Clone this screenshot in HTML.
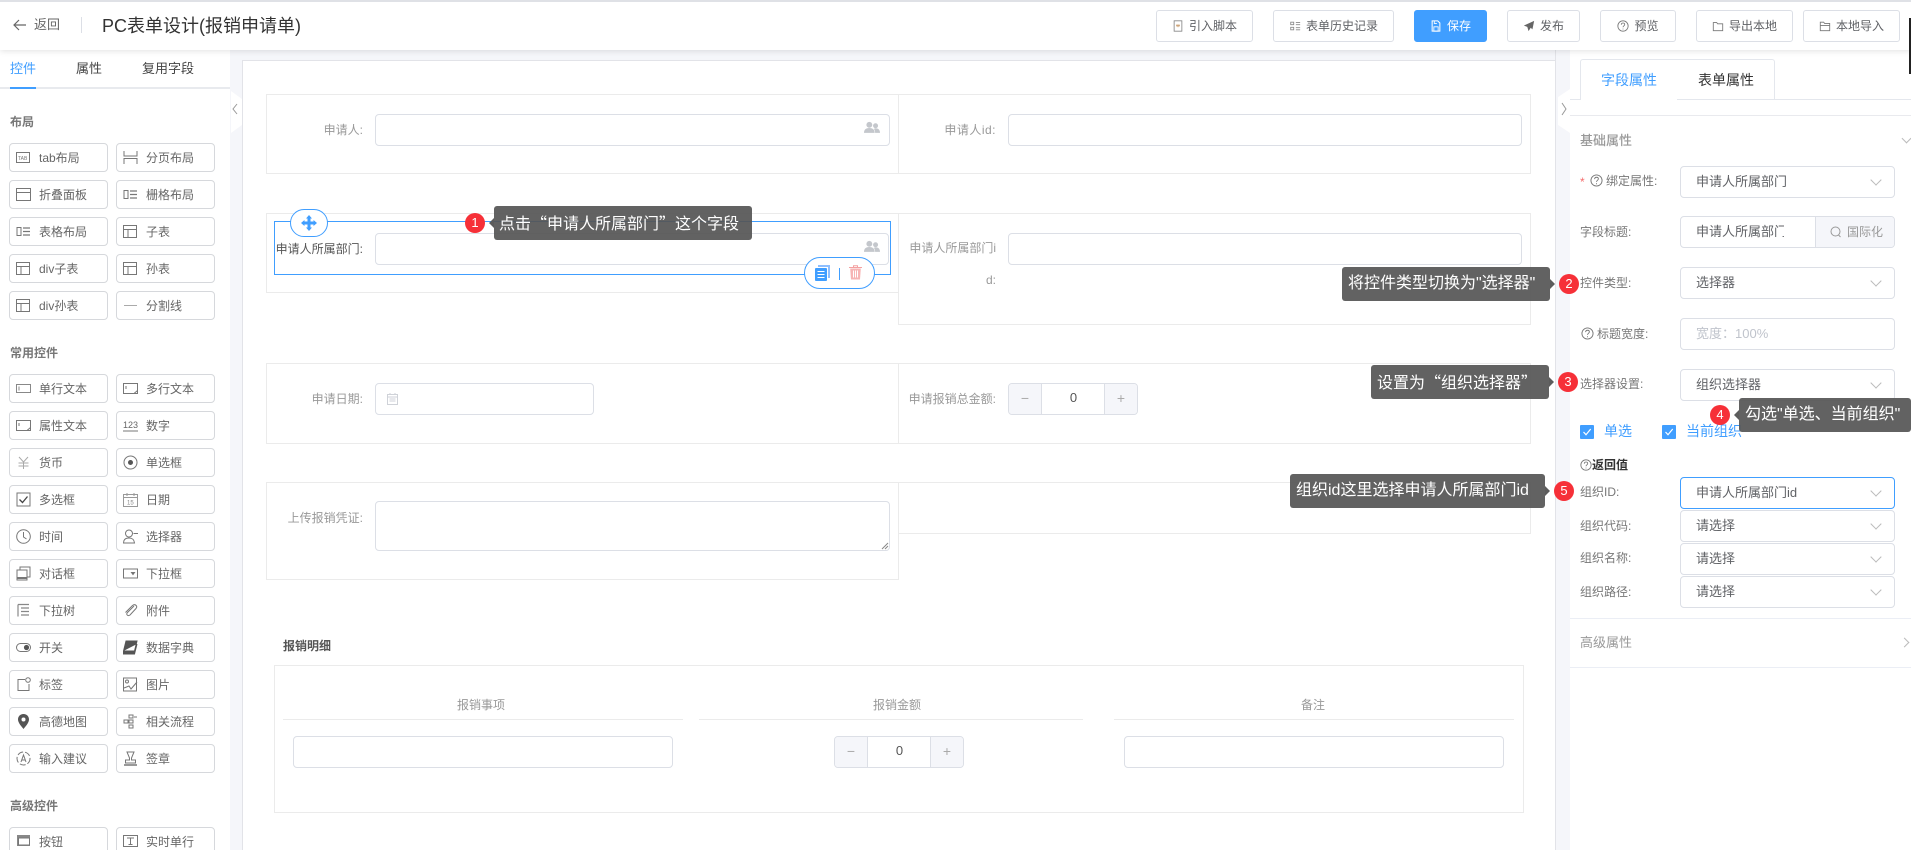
<!DOCTYPE html>
<html lang="zh"><head><meta charset="utf-8"><title>PC表单设计</title>
<style>
*{box-sizing:border-box}
html,body{margin:0;padding:0;width:1911px;height:850px;overflow:hidden;background:#f5f6fa;font-family:"Liberation Sans","Noto Sans CJK SC",sans-serif;color:#606266}
#root{position:relative;width:1911px;height:850px;overflow:hidden}
.a{position:absolute}
.t{position:absolute;white-space:nowrap;font-size:12px;line-height:18px}
#hd{left:0;top:0;width:1911px;height:50px;background:#fff;border-top:2px solid #dfe1e6;box-shadow:0 1px 6px rgba(0,0,0,.12);z-index:5}
.hb{position:absolute;top:10px;height:32px;border:1px solid #dcdfe6;border-radius:3px;background:#fff;font-size:12px;line-height:30px;color:#606266;text-align:center;white-space:nowrap;z-index:6}
.hb svg{width:12px;height:12px;vertical-align:-2px;margin-right:5px}
.hb.p{background:#409eff;border-color:#409eff;color:#fff}
#lp{left:0;top:50px;width:230px;height:800px;background:#fff}
.b{position:absolute;width:99px;height:29px;border:1px solid #d6d8dc;border-radius:4px;background:#fff;font-size:12px;line-height:28px;padding-left:29px;color:#666;white-space:nowrap}
.b svg{position:absolute;left:6px;top:6px;width:15px;height:15px;fill:none;stroke:#777;stroke-width:1}
.sec{position:absolute;left:10px;font-size:12px;font-weight:bold;color:#777;line-height:18px}
#fm{left:242px;top:60px;width:1314px;height:800px;background:#fff;border:1px solid #e2e3e8}
.cell{position:absolute;border:1px solid #ebebeb;background:#fff}
.in{position:absolute;background:#fff;border:1px solid #dcdfe6;border-radius:4px}
.lb{position:absolute;text-align:right;font-size:12px;line-height:18px;color:#999;white-space:nowrap}
#rp{left:1570px;top:50px;width:341px;height:800px;background:#fff}
.sl{position:absolute;left:1680px;width:215px;height:32px;background:#fff;border:1px solid #dcdfe6;border-radius:4px;font-size:13px;line-height:30px;padding-left:15px;color:#606266;white-space:nowrap}
.sl::after{content:"";position:absolute;right:14px;top:9px;width:7px;height:7px;border-right:1px solid #bbb;border-bottom:1px solid #bbb;transform:rotate(45deg)}
.rl{position:absolute;left:1580px;font-size:12px;line-height:18px;color:#777;white-space:nowrap}
.tip{position:absolute;height:34px;background:rgba(85,85,85,.92);border-radius:3px;color:#fff;font-size:16px;line-height:33px;white-space:nowrap;z-index:9;padding-left:6px}
.tip::after{content:"";position:absolute;top:12px;border:5px solid transparent}
.tip.r::after{right:-10px;border-left-color:#5c5c5c}
.tip.l::after{left:-10px;border-right-color:#5c5c5c}
.dot{position:absolute;width:20px;height:20px;border-radius:50%;background:#f63038;color:#fff;font-size:13px;line-height:20px;text-align:center;z-index:10}
.ck{position:absolute;width:14px;height:14px;background:#409eff;border-radius:1px}
.ck svg{position:absolute;left:2px;top:2px;width:10px;height:10px}
.ch{position:absolute;width:7px;height:7px;border-right:1px solid #bbb;border-bottom:1px solid #bbb}
.nm{position:absolute;top:0;height:30px;background:#f5f6fa;color:#aaa;text-align:center;line-height:28px;font-size:14px;width:33px}
.nv{position:absolute;left:33px;top:0;width:63px;height:30px;text-align:center;line-height:27px;font-size:13px;color:#555}
</style></head><body>
<svg width="0" height="0" style="position:absolute">
<defs>
<symbol id="tb" viewBox="0 0 15 15"><rect x=".5" y="1.500" width="13" height="12" fill="none" stroke="#777"/><path d="M.5 5.500h13M5 5.500v8" fill="none" stroke="#777"/></symbol>
<symbol id="ti" viewBox="0 0 15 15"><rect x=".5" y="3.500" width="14" height="8" fill="none" stroke="#888"/><path d="M3 5.500v4" fill="none" stroke="#888"/></symbol>
<symbol id="ta" viewBox="0 0 15 15"><rect x=".5" y="2.500" width="14" height="10" fill="none" stroke="#777"/><path d="M3 5v3M11 12.500l3.500-3" fill="none" stroke="#777"/></symbol>
<symbol id="ls" viewBox="0 0 15 15"><rect x="1" y="3.500" width="4" height="8" fill="none" stroke="#777"/><path d="M7 4h7M7 7.500h7M7 11h7" fill="none" stroke="#777" stroke-width="1.300"/></symbol>
<symbol id="pp" viewBox="0 0 18 14"><circle cx="6" cy="4" r="3.300" fill="#c4c7cc"/><circle cx="13" cy="5" r="2.800" fill="#c4c7cc"/><path d="M0 13c0-4 2.500-5.500 6-5.500S12 9 12 13zM12.500 13c0-2-.5-3.500-1.500-4.500 1-.5 4-1 5.500.5 1 1 1.500 2.500 1.500 4z" fill="#c4c7cc"/></symbol>
<symbol id="ckm" viewBox="0 0 10 10"><path d="M1.500 5l2.500 2.700L8.700 2" fill="none" stroke="#fff" stroke-width="1.200"/></symbol>
<symbol id="q" viewBox="0 0 14 14"><circle cx="7" cy="7" r="6" fill="none" stroke="#777"/><path d="M5 5.500c0-1.300 1-2 2.100-2S9 4.300 9 5.300C9 6.800 7 6.800 7 8.500M7 10v1" fill="none" stroke="#777" stroke-width="1"/></symbol>
</defs></svg>
<div id="root">
<div id="hd" class="a"></div>
<svg class="a" style="left:12px;top:17px;z-index:6" width="16" height="16" viewBox="0 0 16 16"><path d="M14 8H2M7 3L2 8l5 5" fill="none" stroke="#666" stroke-width="1.200"/></svg>
<div class="t" style="left:34px;top:16px;font-size:13px;color:#666;z-index:6">返回</div>
<div class="a" style="left:81px;top:17px;width:1px;height:16px;background:#dcdfe6;z-index:6"></div>
<div class="t" style="left:102px;top:14px;font-size:18px;line-height:24px;color:#333;z-index:6">PC表单设计(报销申请单)</div>

<div class="hb" style="left:1156px;width:97px"><svg viewBox="0 0 14 14"><path d="M2.500 1h9v12h-9z" fill="none" stroke="#888"/><path d="M5 5.500l1 2 1-2 1 2 1-2" fill="none" stroke="#c89a6a"/></svg>引入脚本</div>
<div class="hb" style="left:1273px;width:121px"><svg viewBox="0 0 14 14"><path d="M2 2.500h3.500v3H2zM2 8.500h3.500v3H2zM8 3h5M8 5.500h5M8 9h5M8 11.500h5" fill="none" stroke="#888"/></svg>表单历史记录</div>
<div class="hb p" style="left:1414px;width:73px"><svg viewBox="0 0 14 14"><path d="M2.500 1h6.500l2.500 2.500V13h-9z" fill="none" stroke="#fff" stroke-width="1.200"/><path d="M4.500 8h5v5h-5zM5 1v3h3" fill="none" stroke="#fff"/></svg>保存</div>
<div class="hb" style="left:1507px;width:73px"><svg viewBox="0 0 14 14"><path d="M13 1L1 6.500l4 1.500 1.500 5L9 9l2 2z" fill="#666"/></svg>发布</div>
<div class="hb" style="left:1600px;width:76px"><svg viewBox="0 0 14 14"><use href="#q"/></svg>预览</div>
<div class="hb" style="left:1696px;width:97px"><svg viewBox="0 0 14 14"><path d="M1.500 3h4l1 1.500h6v8h-11z" fill="none" stroke="#777"/></svg>导出本地</div>
<div class="hb" style="left:1803px;width:97px"><svg viewBox="0 0 14 14"><path d="M1.500 2.500h4l1 1.500h6v8.500h-11zM1.500 6.500h11" fill="none" stroke="#777"/></svg>本地导入</div>
<div class="a" style="left:1909px;top:18px;width:2px;height:56px;background:#222;z-index:7"></div>

<!-- left panel -->
<div id="lp" class="a"></div>
<div class="a" style="left:0;top:87px;width:230px;height:2px;background:#e8eaee"></div>
<div class="a" style="left:10px;top:87px;width:26px;height:2px;background:#409eff"></div>
<div class="t" style="left:10px;top:60px;font-size:13px;color:#409eff">控件</div>
<div class="t" style="left:76px;top:60px;font-size:13px;color:#444">属性</div>
<div class="t" style="left:142px;top:60px;font-size:13px;color:#444">复用字段</div>
<svg class="a" style="left:231px;top:91px" width="11" height="42" viewBox="0 0 11 42"><path d="M0 0l11 8v26L0 42z" fill="#fff"/><path d="M6 13l-4 5 4 5" fill="none" stroke="#999"/></svg>

<div class="sec" style="top:113px">布局</div>
<div class="b" style="left:9px;top:143px"><svg viewBox="0 0 15 15"><rect x=".5" y="2.500" width="13" height="10"/><text x="2" y="10" font-size="5" fill="#777" stroke="none" font-family="Liberation Sans">TAB</text></svg>tab布局</div>
<div class="b" style="left:116px;top:143px"><svg viewBox="0 0 15 15"><path d="M1 1v5h13V1M1 14V8.500h13V14"/></svg>分页布局</div>
<div class="b" style="left:9px;top:180px"><svg viewBox="0 0 15 15"><rect x=".5" y="1.500" width="14" height="12"/><path d="M.5 5.500h14"/></svg>折叠面板</div>
<div class="b" style="left:116px;top:180px"><svg><use href="#ls"/></svg>栅格布局</div>
<div class="b" style="left:9px;top:217px"><svg><use href="#ls"/></svg>表格布局</div>
<div class="b" style="left:116px;top:217px"><svg><use href="#tb"/></svg>子表</div>
<div class="b" style="left:9px;top:254px"><svg><use href="#tb"/></svg>div子表</div>
<div class="b" style="left:116px;top:254px"><svg><use href="#tb"/></svg>孙表</div>
<div class="b" style="left:9px;top:291px"><svg><use href="#tb"/></svg>div孙表</div>
<div class="b" style="left:116px;top:291px"><svg viewBox="0 0 15 15"><path d="M1 7.500h13" stroke="#aaa"/></svg>分割线</div>

<div class="sec" style="top:344px">常用控件</div>
<div class="b" style="left:9px;top:374px"><svg><use href="#ti"/></svg>单行文本</div>
<div class="b" style="left:116px;top:374px"><svg><use href="#ta"/></svg>多行文本</div>
<div class="b" style="left:9px;top:411px"><svg><use href="#ta"/></svg>属性文本</div>
<div class="b" style="left:116px;top:411px"><svg viewBox="0 0 15 15"><text x="0" y="10" font-size="9" fill="#666" stroke="none" font-family="Liberation Sans">123</text><path d="M0 13h15"/></svg>数字</div>
<div class="b" style="left:9px;top:448px"><svg viewBox="0 0 15 15"><path d="M3 2l4.500 5L12 2M2.500 8h10M2.500 11h10M7.500 7v7" stroke="#aaa"/></svg>货币</div>
<div class="b" style="left:116px;top:448px"><svg viewBox="0 0 15 15"><circle cx="7.500" cy="7.500" r="6.500"/><circle cx="7.500" cy="7.500" r="2.500" fill="#555" stroke="none"/></svg>单选框</div>
<div class="b" style="left:9px;top:485px"><svg viewBox="0 0 15 15"><rect x="1" y="1" width="13" height="13"/><path d="M3.500 7.500l3 3 5-6" stroke="#444" stroke-width="1.300"/></svg>多选框</div>
<div class="b" style="left:116px;top:485px"><svg viewBox="0 0 15 15"><path d="M.5 2.500h14v12H.5zM.5 5.500h14M4 1v3M11 1v3" stroke="#999"/><text x="4" y="12.500" font-size="6" fill="#888" stroke="none" font-family="Liberation Sans">15</text></svg>日期</div>
<div class="b" style="left:9px;top:522px"><svg viewBox="0 0 15 15"><circle cx="7.500" cy="7.500" r="6.800"/><path d="M7.500 3v5l3 2"/></svg>时间</div>
<div class="b" style="left:116px;top:522px"><svg viewBox="0 0 15 15"><circle cx="6" cy="4.500" r="3.500"/><path d="M.5 14c0-3.500 2-5 5.500-5s5 1.500 5.500 5zM10.500 4.500H15"/></svg>选择器</div>
<div class="b" style="left:9px;top:559px"><svg viewBox="0 0 15 15"><path d="M1 4h10v10H1zM4 4V1h10v10h-3"/><path d="M1 12h10" stroke-width="2"/></svg>对话框</div>
<div class="b" style="left:116px;top:559px"><svg viewBox="0 0 15 15"><rect x=".5" y="3" width="14" height="9"/><path d="M8.500 6.500h3l-1.500 2z" fill="#666"/></svg>下拉框</div>
<div class="b" style="left:9px;top:596px"><svg viewBox="0 0 15 15"><path d="M2 1.500h11M2 1.500v12M5 5h8M5 8.500h8M5 12h8" stroke="#888" stroke-width="1.200"/></svg>下拉树</div>
<div class="b" style="left:116px;top:596px"><svg viewBox="0 0 15 15"><path d="M11 3L4.500 9.500c-2 2 .5 4 2.500 2.500L13 5.500C15 3 12 .5 9.500 2.500L2.500 9.500"/></svg>附件</div>
<div class="b" style="left:9px;top:633px"><svg viewBox="0 0 15 15"><rect x=".5" y="3.500" width="14" height="8" rx="4"/><circle cx="10.500" cy="7.500" r="2.600" fill="#555" stroke="none"/></svg>开关</div>
<div class="b" style="left:116px;top:633px"><svg viewBox="0 0 15 15"><path d="M3 1h11l-2.500 10H.5zM.5 11v3h11l2.500-10" fill="#555" stroke="#555"/></svg>数据字典</div>
<div class="b" style="left:9px;top:670px"><svg viewBox="0 0 15 15"><path d="M9 2.500H2v11h11V7"/><circle cx="12" cy="3" r="2.300"/></svg>标签</div>
<div class="b" style="left:116px;top:670px"><svg viewBox="0 0 15 15"><rect x=".5" y="1" width="13" height="13"/><circle cx="4" cy="4.500" r="1.500"/><path d="M1 11l5-2 2 3 6-7"/></svg>图片</div>
<div class="b" style="left:9px;top:707px"><svg viewBox="0 0 15 15"><path d="M7.500 0C4 0 2 2.500 2 5.500 2 9 6 13 7.500 15 9 13 13 9 13 5.500 13 2.500 11 0 7.500 0z" fill="#555" stroke="none"/><circle cx="7.500" cy="5.500" r="2" fill="#fff" stroke="none"/></svg>高德地图</div>
<div class="b" style="left:116px;top:707px"><svg viewBox="0 0 15 15"><rect x="6" y="1" width="4" height="3"/><rect x="1" y="6" width="4" height="3"/><rect x="6" y="6" width="4" height="3"/><rect x="6" y="11" width="4" height="3"/><path d="M11 3h3"/></svg>相关流程</div>
<div class="b" style="left:9px;top:744px"><svg viewBox="0 0 15 15"><circle cx="7.500" cy="7.500" r="6.500" stroke-dasharray="6 2"/><path d="M5 11l2.500-7 2.500 7M6 9h3"/></svg>输入建议</div>
<div class="b" style="left:116px;top:744px"><svg viewBox="0 0 15 15"><path d="M4 1h7l-2.500 6v2h4v3h-10V9h4V7z"/><path d="M1 14h13" stroke-width="1.500"/></svg>签章</div>

<div class="sec" style="top:797px">高级控件</div>
<div class="b" style="left:9px;top:827px"><svg viewBox="0 0 15 15"><rect x="1" y="1" width="13" height="11" fill="#888" stroke="none"/><rect x="2.500" y="4" width="11" height="7" fill="#fff"/></svg>按钮</div>
<div class="b" style="left:116px;top:827px"><svg viewBox="0 0 15 15"><rect x=".5" y="1.500" width="14" height="11"/><path d="M4 4h7M7.500 4v6.500M5.500 10.500h4"/></svg>实时单行</div>

<!-- form canvas -->
<div id="fm" class="a"></div>
<div class="cell" style="left:266px;top:94px;width:633px;height:80px"></div>
<div class="cell" style="left:898px;top:94px;width:633px;height:80px"></div>
<div class="cell" style="left:266px;top:213px;width:633px;height:80px"></div>
<div class="cell" style="left:898px;top:213px;width:633px;height:112px"></div>
<div class="cell" style="left:266px;top:363px;width:633px;height:81px"></div>
<div class="cell" style="left:898px;top:363px;width:633px;height:81px"></div>
<div class="cell" style="left:266px;top:482px;width:633px;height:98px"></div>
<div class="cell" style="left:898px;top:482px;width:633px;height:52px"></div>

<div class="lb" style="right:1548px;top:121px">申请人:</div>
<div class="in" style="left:375px;top:114px;width:515px;height:32px"></div>
<svg class="a" style="left:864px;top:121px" width="16" height="13"><use href="#pp"/></svg>
<div class="lb" style="right:915px;top:121px;letter-spacing:.5px">申请人id:</div>
<div class="in" style="left:1008px;top:114px;width:514px;height:32px"></div>

<div class="lb" style="right:1548px;top:240px;color:#555">申请人所属部门:</div>
<div class="in" style="left:375px;top:233px;width:514px;height:32px"></div>
<svg class="a" style="left:864px;top:240px" width="16" height="13"><use href="#pp"/></svg>
<div class="a" style="left:274px;top:221px;width:617px;height:54px;border:1px solid #409eff"></div>
<div class="a" style="left:290px;top:209px;width:38px;height:28px;border:1px solid #409eff;border-radius:14px;background:#fff"></div>
<svg class="a" style="left:301px;top:215px" width="16" height="16" viewBox="0 0 16 16"><path d="M8 0l3 3.500H9.500V6.500h3V5L16 8l-3.500 3V9.500h-3v3H11L8 16l-3-3.500h1.500v-3h-3V11L0 8l3.500-3v1.500h3v-3H5z" fill="#409eff"/></svg>
<div class="a" style="left:804px;top:257px;width:71px;height:32px;border:1px solid #409eff;border-radius:16px;background:#fff"></div>
<svg class="a" style="left:815px;top:265px" width="16" height="16" viewBox="0 0 16 16"><path d="M3 0h12v13h-2V2H3z" fill="#8fbfff"/><rect x="0" y="3" width="12" height="13" rx="1" fill="#409eff"/><path d="M2.500 6.500h7M2.500 9.500h7M2.500 12.500h7" stroke="#fff"/></svg>
<div class="a" style="left:839px;top:268px;width:1px;height:12px;background:#409eff"></div>
<svg class="a" style="left:849px;top:265px" width="13" height="15" viewBox="0 0 13 15"><path d="M0 2.500h13M4.500 2.500V.7h4v1.800" stroke="#f4a0a0" fill="none"/><path d="M1.200 3.500h10.600L11 14.500H2z" fill="#f7b4b4"/><path d="M4.500 5.500v7M6.500 5.500v7M8.500 5.500v7" stroke="#fff"/></svg>

<div class="lb" style="right:915px;top:239px">申请人所属部门i</div>
<div class="lb" style="right:915px;top:271px">d:</div>
<div class="in" style="left:1008px;top:233px;width:514px;height:32px"></div>

<div class="lb" style="right:1548px;top:390px">申请日期:</div>
<div class="in" style="left:375px;top:383px;width:219px;height:32px"></div>
<svg class="a" style="left:387px;top:393px" width="11" height="12" viewBox="0 0 11 12"><path d="M.5 1.500h10v10H.5zM.5 4h10M3 0v2M8 0v2M2.500 6h6M2.500 8h6" fill="none" stroke="#cfd2d8"/></svg>
<div class="lb" style="right:915px;top:390px">申请报销总金额:</div>
<div class="in" style="left:1008px;top:383px;width:130px;height:32px;overflow:hidden">
  <div class="nm" style="left:0;border-right:1px solid #dcdfe6">−</div>
  <div class="nv">0</div>
  <div class="nm" style="right:0;border-left:1px solid #dcdfe6">+</div>
</div>

<div class="lb" style="right:1548px;top:509px">上传报销凭证:</div>
<div class="in" style="left:375px;top:501px;width:515px;height:50px"></div>
<svg class="a" style="left:881px;top:542px" width="8" height="8"><path d="M1 7l6-6M4 7l3-3" stroke="#888" fill="none"/></svg>

<div class="t" style="left:283px;top:637px;font-weight:bold;color:#555;font-size:12px">报销明细</div>
<div class="cell" style="left:274px;top:665px;width:1250px;height:148px"></div>
<div class="a" style="left:283px;top:719px;width:400px;height:1px;background:#ebebeb"></div>
<div class="a" style="left:699px;top:719px;width:384px;height:1px;background:#ebebeb"></div>
<div class="a" style="left:1114px;top:719px;width:400px;height:1px;background:#ebebeb"></div>
<div class="lb" style="left:457px;top:696px">报销事项</div>
<div class="lb" style="left:873px;top:696px">报销金额</div>
<div class="lb" style="left:1301px;top:696px">备注</div>
<div class="in" style="left:293px;top:736px;width:380px;height:32px"></div>
<div class="in" style="left:834px;top:736px;width:130px;height:32px;overflow:hidden">
  <div class="nm" style="left:0;border-right:1px solid #dcdfe6">−</div>
  <div class="nv">0</div>
  <div class="nm" style="right:0;border-left:1px solid #dcdfe6">+</div>
</div>
<div class="in" style="left:1124px;top:736px;width:380px;height:32px"></div>

<!-- right panel -->
<div class="a" style="left:1555px;top:50px;width:1px;height:800px;background:#e2e3e8"></div>
<div id="rp" class="a"></div>
<div class="a" style="left:1570px;top:99px;width:341px;height:1px;background:#e4e7ed"></div>
<div class="a" style="left:1570px;top:115px;width:341px;height:1px;background:#e9eaee"></div>
<div class="a" style="left:1580px;top:59px;width:98px;height:41px;border:1px solid #e4e7ed;border-bottom:0;border-radius:3px 0 0 0;background:#fff"></div>
<div class="a" style="left:1677px;top:59px;width:98px;height:41px;border:1px solid #e4e7ed;border-left:0;border-radius:0 3px 0 0;background:#fff"></div>
<div class="t" style="left:1601px;top:71px;font-size:14px;color:#409eff">字段属性</div>
<div class="t" style="left:1698px;top:71px;font-size:14px;color:#333">表单属性</div>
<svg class="a" style="left:1558px;top:89px" width="12" height="44" viewBox="0 0 12 44"><path d="M12 0L0 8v28l12 8z" fill="#fff"/><path d="M4 14l4 6-4 6" fill="none" stroke="#999"/></svg>

<div class="t" style="left:1580px;top:132px;font-size:13px;color:#999;font-weight:500">基础属性</div>
<div class="ch" style="left:1903px;top:135px;transform:rotate(45deg)"></div>

<div class="t" style="left:1580px;top:173px;color:#f56c6c">*</div>
<svg class="a" style="left:1590px;top:174px" width="13" height="13"><use href="#q"/></svg>
<div class="rl" style="left:1606px;top:172px">绑定属性:</div>
<div class="sl" style="top:166px">申请人所属部门</div>

<div class="rl" style="top:223px">字段标题:</div>
<div class="a" style="left:1680px;top:216px;width:215px;height:32px;border:1px solid #dcdfe6;border-radius:4px;background:#fff;overflow:hidden;font-size:13px;line-height:30px">
  <div class="a" style="left:15px;top:0;width:88px;overflow:hidden;white-space:nowrap">申请人所属部门</div>
  <div class="a" style="left:134px;top:0;width:80px;height:30px;background:#f5f6fa;border-left:1px solid #dcdfe6;color:#999;padding-left:31px;white-space:nowrap;font-size:12px">国际化</div>
  <svg class="a" style="left:149px;top:9px" width="12" height="12" viewBox="0 0 12 12"><circle cx="5.500" cy="5.500" r="4.500" fill="none" stroke="#999"/><path d="M8.500 9l2 2" stroke="#999"/></svg>
</div>

<div class="rl" style="top:274px">控件类型:</div>
<div class="sl" style="top:267px">选择器</div>

<svg class="a" style="left:1581px;top:327px" width="13" height="13"><use href="#q"/></svg>
<div class="rl" style="left:1597px;top:325px">标题宽度:</div>
<div class="a" style="left:1680px;top:318px;width:215px;height:32px;border:1px solid #dcdfe6;border-radius:4px;background:#fff;font-size:13px;line-height:30px;padding-left:15px;color:#c0c4cc">宽度：100%</div>

<div class="rl" style="top:375px">选择器设置:</div>
<div class="sl" style="top:369px">组织选择器</div>

<div class="ck" style="left:1580px;top:425px"><svg viewBox="0 0 10 10"><use href="#ckm"/></svg></div>
<div class="t" style="left:1604px;top:422px;color:#409eff;font-size:14px">单选</div>
<div class="ck" style="left:1662px;top:425px"><svg viewBox="0 0 10 10"><use href="#ckm"/></svg></div>
<div class="t" style="left:1686px;top:422px;color:#409eff;font-size:14px">当前组织</div>

<svg class="a" style="left:1580px;top:459px" width="12" height="12" viewBox="0 0 14 14"><use href="#q"/></svg>
<div class="t" style="left:1592px;top:456px;font-weight:bold;color:#333">返回值</div>
<div class="rl" style="top:483px">组织ID:</div>
<div class="sl" style="top:477px;border-color:#409eff">申请人所属部门id</div>
<div class="rl" style="top:517px">组织代码:</div>
<div class="sl" style="top:510px">请选择</div>
<div class="rl" style="top:549px">组织名称:</div>
<div class="sl" style="top:543px">请选择</div>
<div class="rl" style="top:583px">组织路径:</div>
<div class="sl" style="top:576px">请选择</div>
<div class="a" style="left:1570px;top:618px;width:341px;height:1px;background:#ebeef5"></div>
<div class="t" style="left:1580px;top:634px;font-size:13px;color:#999">高级属性</div>
<div class="ch" style="left:1901px;top:639px;transform:rotate(-45deg)"></div>
<div class="a" style="left:1570px;top:667px;width:341px;height:1px;background:#ebeef5"></div>

<!-- annotations -->
<div class="dot" style="left:465px;top:213px">1</div>
<div class="tip l" style="left:494px;top:206px;width:258px;padding-left:5px;font-family:'Noto Sans CJK SC',sans-serif">点击“申请人所属部门”这个字段</div>
<div class="dot" style="left:1559px;top:274px">2</div>
<div class="tip r" style="left:1342px;top:267px;width:208px">将控件类型切换为"选择器"</div>
<div class="dot" style="left:1558px;top:372px">3</div>
<div class="tip r" style="left:1371px;top:365px;width:178px;font-family:'Noto Sans CJK SC',sans-serif">设置为“组织选择器”</div>
<div class="dot" style="left:1710px;top:405px">4</div>
<div class="tip l" style="left:1739px;top:398px;width:172px">勾选"单选、当前组织"</div>
<div class="dot" style="left:1554px;top:481px">5</div>
<div class="tip r" style="left:1290px;top:474px;width:255px">组织id这里选择申请人所属部门id</div>
</div>
</body></html>
